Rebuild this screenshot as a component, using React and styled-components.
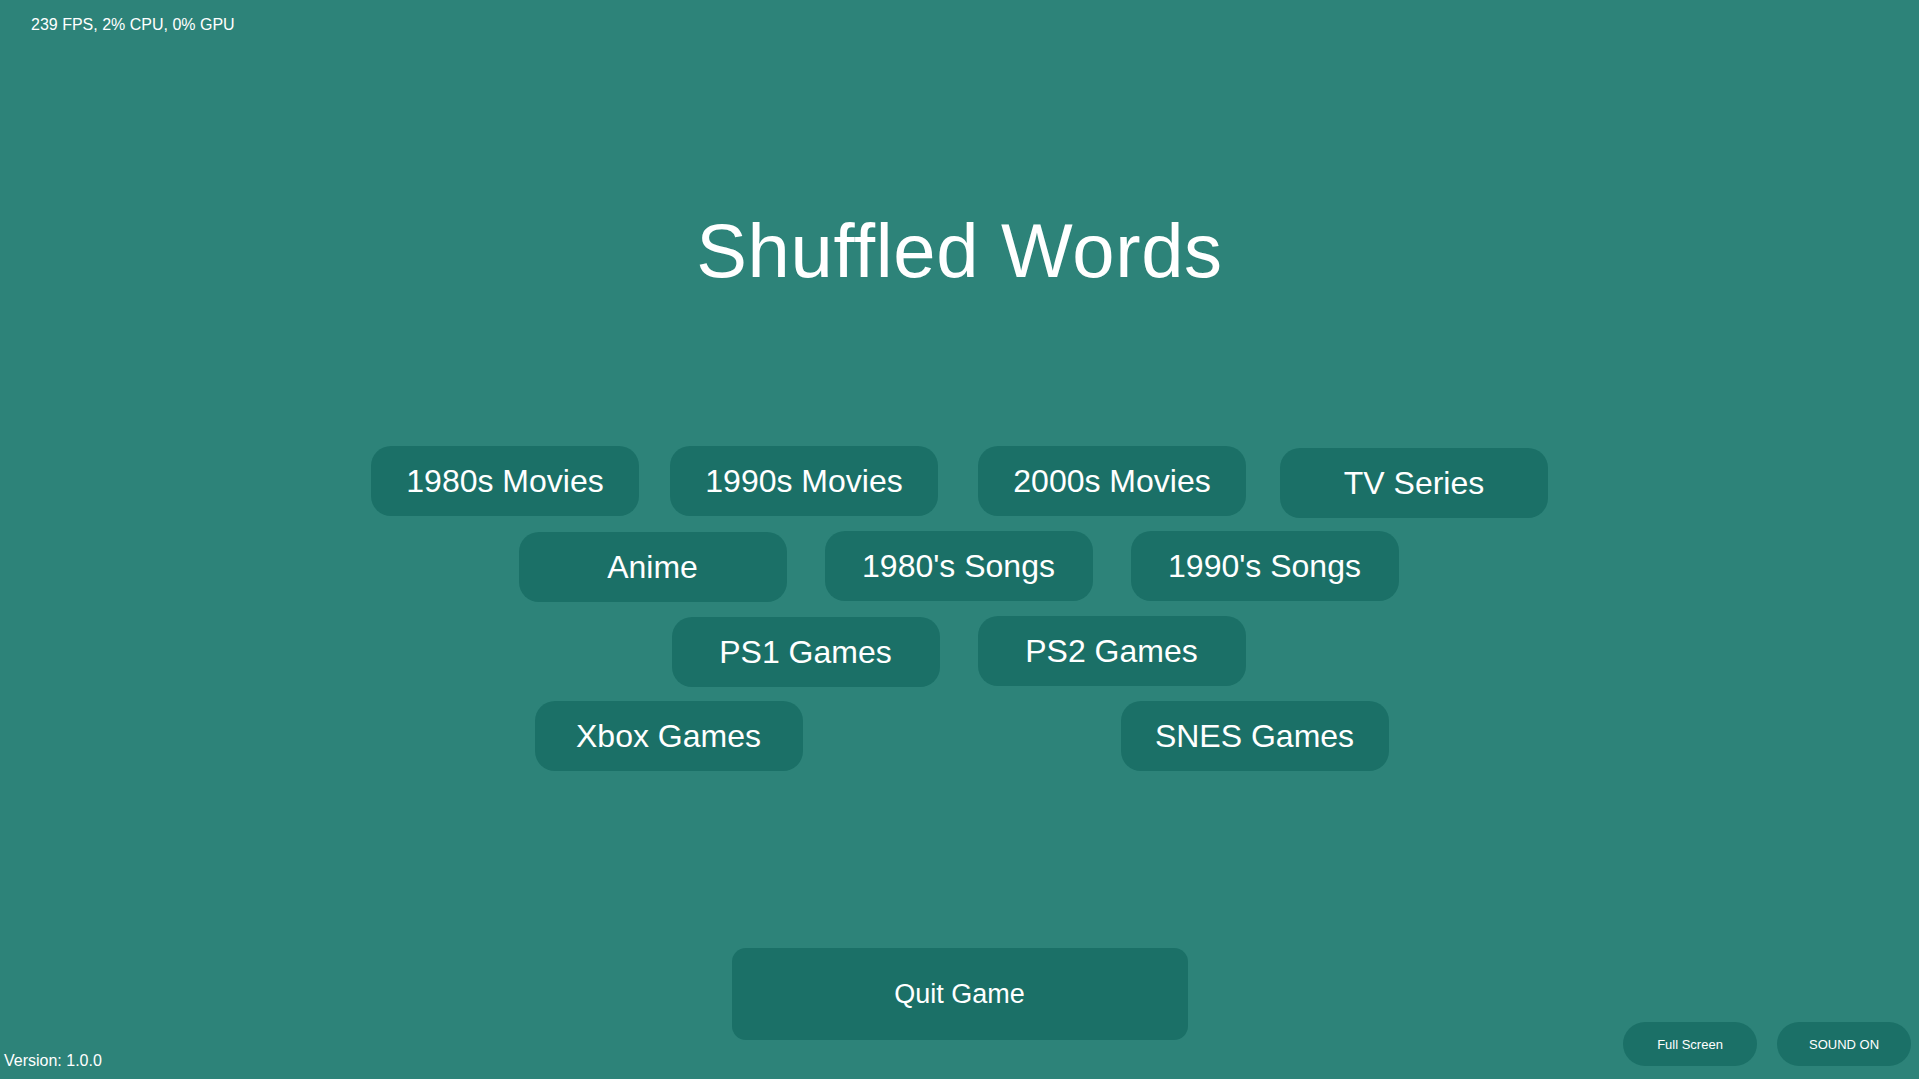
import styled, { createGlobalStyle } from 'styled-components';

const GlobalStyle = createGlobalStyle`
  html, body {
    margin: 0;
    padding: 0;
    background: #2d8379;
  }
  body {
    font-family: "Liberation Sans", Arial, sans-serif;
    color: #ffffff;
  }
`;

const rows = [
  {
    gap: 35,
    items: [
      { label: '1980s Movies' },
      { label: '1990s Movies', dx: -4 },
      { label: '2000s Movies', dx: 1 },
      { label: 'TV Series', dy: 2 },
    ],
  },
  {
    gap: 38,
    items: [
      { label: 'Anime', dx: -1, dy: 1 },
      { label: "1980's Songs", dx: -1 },
      { label: "1990's Songs", dx: -1 },
    ],
  },
  {
    gap: 38,
    items: [
      { label: 'PS1 Games', dx: -1, dy: 1 },
      { label: 'PS2 Games', dx: -1 },
    ],
  },
  {
    gap: 318,
    items: [
      { label: 'Xbox Games', dx: 2 },
      { label: 'SNES Games', dx: 2 },
    ],
  },
];

const App = () => {
  return (
    <>
      <GlobalStyle />
      <Screen>
        <Stats>239 FPS, 2% CPU, 0% GPU</Stats>
        <Title>Shuffled Words</Title>
        <Categories>
          {rows.map((row, i) => (
            <Row key={i} $gap={row.gap}>
              {row.items.map((item) => (
                <CategoryButton key={item.label} $dx={item.dx} $dy={item.dy}>
                  {item.label}
                </CategoryButton>
              ))}
            </Row>
          ))}
        </Categories>
        <Bottom>
          <Version>Version: 1.0.0</Version>
          <QuitButton>Quit Game</QuitButton>
          <Toggles>
            <PillButton>Full Screen</PillButton>
            <PillButton>SOUND ON</PillButton>
          </Toggles>
        </Bottom>
      </Screen>
    </>
  );
};

const Screen = styled.main`
  display: flex;
  flex-direction: column;
  align-items: stretch;
  width: 100vw;
  height: 100vh;
  overflow: hidden;
  background: #2d8379;
`;

const Stats = styled.div`
  padding: 16px 0 0 31px;
  font-size: 16px;
  line-height: 18px;
  color: #ffffff;
`;

const Title = styled.h1`
  margin: 179px 0 0;
  text-align: center;
  font-size: 76px;
  font-weight: normal;
  letter-spacing: 0.7px;
  line-height: 76px;
  color: #ffffff;
`;

const Categories = styled.section`
  display: flex;
  flex-direction: column;
  gap: 15px;
  margin-top: 157px;
`;

const Row = styled.div`
  display: flex;
  justify-content: center;
  gap: ${(p) => p.$gap}px;
`;

const CategoryButton = styled.button`
  display: flex;
  align-items: center;
  justify-content: center;
  width: 268px;
  height: 70px;
  padding: 0;
  border: none;
  border-radius: 20px;
  background: #1b7067;
  color: #ffffff;
  font-family: "Liberation Sans", Arial, sans-serif;
  font-size: 32px;
  transform: translate(${(p) => p.$dx || 0}px, ${(p) => p.$dy || 0}px);
  cursor: pointer;
`;

const Bottom = styled.footer`
  display: grid;
  grid-template-columns: 1fr auto 1fr;
  align-items: end;
  margin-top: auto;
`;

const Version = styled.div`
  justify-self: start;
  padding: 0 0 9px 4px;
  font-size: 16px;
  line-height: 18px;
  color: #ffffff;
`;

const QuitButton = styled.button`
  width: 456px;
  height: 92px;
  margin-bottom: 39px;
  border: none;
  border-radius: 14px;
  background: #1b7067;
  color: #ffffff;
  font-family: "Liberation Sans", Arial, sans-serif;
  font-size: 27px;
  cursor: pointer;
`;

const Toggles = styled.div`
  justify-self: end;
  display: flex;
  gap: 20px;
  padding: 0 8px 13px 0;
`;

const PillButton = styled.button`
  width: 134px;
  height: 44px;
  padding: 0;
  border: none;
  border-radius: 22px;
  background: #1b7067;
  color: #ffffff;
  font-family: "Liberation Sans", Arial, sans-serif;
  font-size: 13px;
  cursor: pointer;
`;

export default App;
